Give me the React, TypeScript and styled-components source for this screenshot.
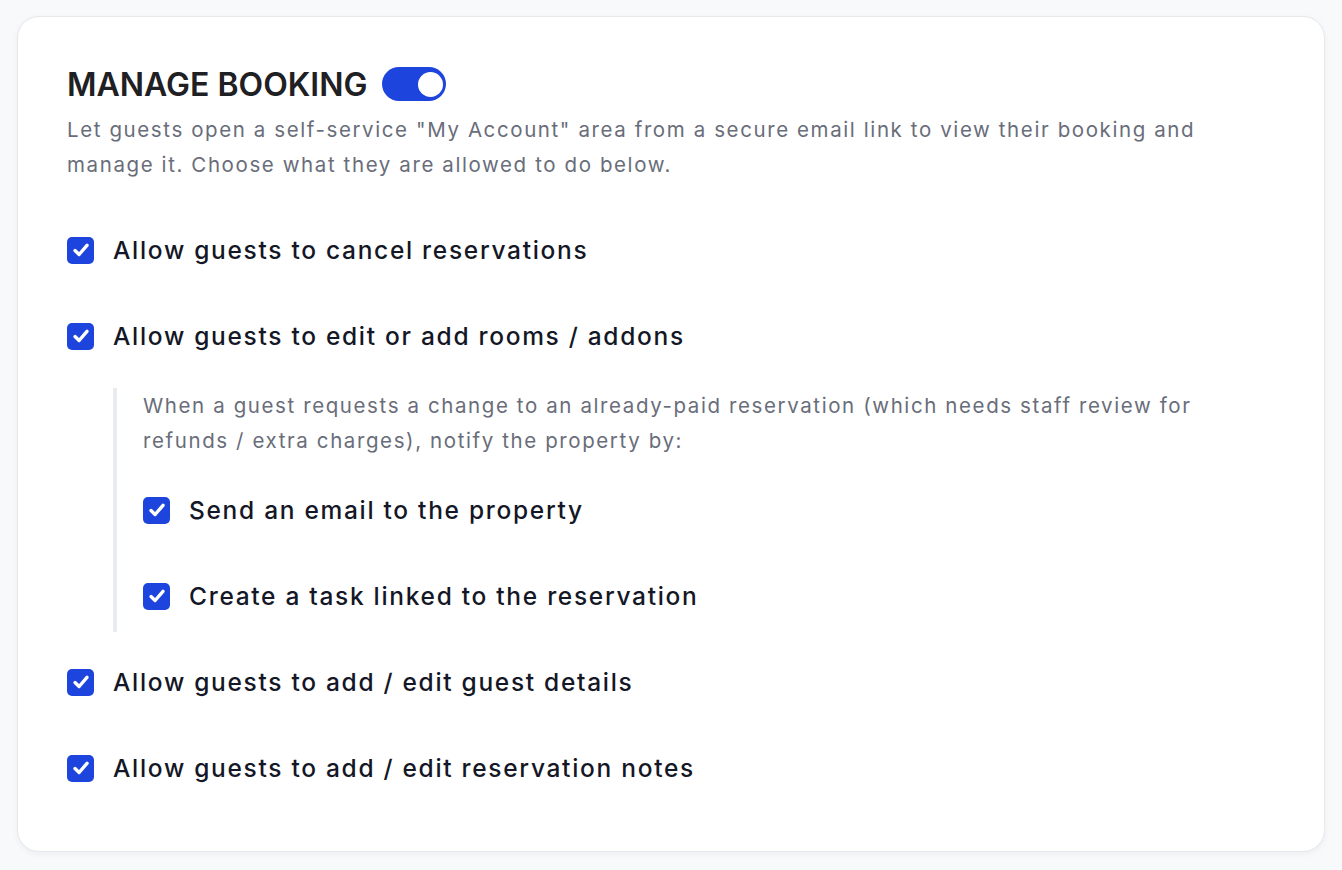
import React, { useState } from "react";
import styled, { createGlobalStyle } from "styled-components";

const Global = createGlobalStyle`
  html, body { margin: 0; padding: 0; background: #f8f9fb; }
  body {
    font-family: Inter, "Noto Sans", sans-serif;
    -webkit-font-smoothing: antialiased;
  }
  * { box-sizing: border-box; }
`;

const Page = styled.div`
  padding: 16px 17px 17px 17px;
  min-height: 870px;
`;

const Card = styled.section`
  background: #ffffff;
  border: 1px solid #e6e8ec;
  border-radius: 22px;
  box-shadow: 0 2px 6px rgba(16, 24, 40, 0.05);
  padding: 50px 49px 65px 49px;
`;

const TitleRow = styled.div`
  display: flex;
  align-items: center;
  gap: 15px;
  height: 34px;
`;

const Title = styled.h2`
  margin: 0;
  font-size: 32px;
  font-weight: 600;
  color: #1f2024;
  letter-spacing: 0;
`;

const Toggle = styled.button<{ $on: boolean }>`
  width: 64px;
  height: 34px;
  border-radius: 17px;
  border: none;
  padding: 0 3px;
  background: ${(p) => (p.$on ? "#1d45dd" : "#d1d5db")};
  display: flex;
  align-items: center;
  justify-content: ${(p) => (p.$on ? "flex-end" : "flex-start")};
  cursor: pointer;
`;

const Knob = styled.span`
  width: 25px;
  height: 25px;
  border-radius: 50%;
  background: #ffffff;
  display: block;
`;

const Description = styled.p<{ $nested?: boolean }>`
  margin: ${(p) => (p.$nested ? "0" : "11px 0 0 0")};
  font-size: 20.5px;
  line-height: 35px;
  letter-spacing: 1.6px;
  color: #696d7a;
  font-weight: 400;
`;

const Options = styled.div`
  display: flex;
  flex-direction: column;
  gap: 50px;
  margin-top: 50px;
`;

const Group = styled.div`
  display: flex;
  flex-direction: column;
  gap: 34px;
`;

const Nested = styled.div`
  margin-left: 46px;
  margin-bottom: -18px;
  border-left: 4px solid #eaebef;
  padding: 0 0 18px 26px;
  display: flex;
  flex-direction: column;
  gap: 34px;
`;

const NestedRows = styled.div`
  display: flex;
  flex-direction: column;
  gap: 50px;
`;

const Row = styled.label`
  display: flex;
  align-items: center;
  gap: 19px;
  height: 36px;
  cursor: pointer;
`;

const Box = styled.span<{ $checked: boolean }>`
  width: 27px;
  height: 27px;
  flex: none;
  border-radius: 5px;
  background: ${(p) => (p.$checked ? "#1d45dd" : "#ffffff")};
  border: ${(p) => (p.$checked ? "none" : "2px solid #c4c8d0")};
  display: flex;
  align-items: center;
  justify-content: center;
`;

const Label = styled.span`
  font-size: 24.5px;
  font-weight: 500;
  letter-spacing: 1.7px;
  color: #141726;
`;

function Check({ label, checked, onToggle }: { label: string; checked: boolean; onToggle: () => void }) {
  return (
    <Row onClick={onToggle}>
      <Box $checked={checked}>
        {checked && (
          <svg width="20" height="20" viewBox="0 0 20 20" fill="none">
            <path d="M4 10.6 L8.1 14.5 L16 5.4" stroke="#ffffff" strokeWidth="3.4" strokeLinecap="round" strokeLinejoin="round" />
          </svg>
        )}
      </Box>
      <Label>{label}</Label>
    </Row>
  );
}

export default function App() {
  const [on, setOn] = useState(true);
  const [c, setC] = useState<Record<string, boolean>>({
    cancel: true,
    edit: true,
    email: true,
    task: true,
    guest: true,
    notes: true,
  });
  const t = (k: string) => () => setC((s) => ({ ...s, [k]: !s[k] }));

  return (
    <Page>
      <Global />
      <Card>
        <TitleRow>
          <Title>MANAGE BOOKING</Title>
          <Toggle $on={on} onClick={() => setOn(!on)} aria-label="Toggle manage booking">
            <Knob />
          </Toggle>
        </TitleRow>
        <Description>
          Let guests open a self-service "My Account" area from a secure email link to view their booking and
          manage it. Choose what they are allowed to do below.
        </Description>
        <Options>
          <Check label="Allow guests to cancel reservations" checked={c.cancel} onToggle={t("cancel")} />
          <Group>
            <Check label="Allow guests to edit or add rooms / addons" checked={c.edit} onToggle={t("edit")} />
            <Nested>
              <Description $nested>
                When a guest requests a change to an already-paid reservation (which needs staff review for
                refunds / extra charges), notify the property by:
              </Description>
              <NestedRows>
                <Check label="Send an email to the property" checked={c.email} onToggle={t("email")} />
                <Check label="Create a task linked to the reservation" checked={c.task} onToggle={t("task")} />
              </NestedRows>
            </Nested>
          </Group>
          <Check label="Allow guests to add / edit guest details" checked={c.guest} onToggle={t("guest")} />
          <Check label="Allow guests to add / edit reservation notes" checked={c.notes} onToggle={t("notes")} />
        </Options>
      </Card>
    </Page>
  );
}
